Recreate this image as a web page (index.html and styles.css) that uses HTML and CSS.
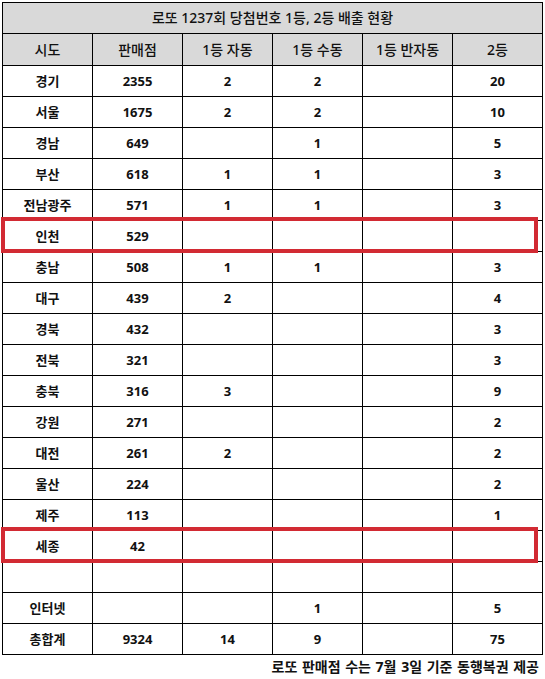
FILE: index.html
```html
<!DOCTYPE html>
<html lang="ko">
<head>
<meta charset="utf-8">
<title>로또 1237회 당첨번호 1등, 2등 배출 현황</title>
<link rel="stylesheet" href="styles.css">
</head>
<body>
<div class="wrap">
  <table class="lotto">
    <colgroup>
      <col class="c"><col class="c"><col class="c"><col class="c"><col class="c"><col class="c">
    </colgroup>
    <thead>
      <tr class="title"><th colspan="6">로또 1237회 당첨번호 1등, 2등 배출 현황</th></tr>
      <tr class="head"><th>시도</th><th>판매점</th><th>1등 자동</th><th>1등 수동</th><th>1등 반자동</th><th>2등</th></tr>
    </thead>
    <tbody>
      <tr><td>경기</td><td>2355</td><td>2</td><td>2</td><td></td><td>20</td></tr>
      <tr><td>서울</td><td>1675</td><td>2</td><td>2</td><td></td><td>10</td></tr>
      <tr><td>경남</td><td>649</td><td></td><td>1</td><td></td><td>5</td></tr>
      <tr><td>부산</td><td>618</td><td>1</td><td>1</td><td></td><td>3</td></tr>
      <tr><td>전남광주</td><td>571</td><td>1</td><td>1</td><td></td><td>3</td></tr>
      <tr><td>인천</td><td>529</td><td></td><td></td><td></td><td></td></tr>
      <tr><td>충남</td><td>508</td><td>1</td><td>1</td><td></td><td>3</td></tr>
      <tr><td>대구</td><td>439</td><td>2</td><td></td><td></td><td>4</td></tr>
      <tr><td>경북</td><td>432</td><td></td><td></td><td></td><td>3</td></tr>
      <tr><td>전북</td><td>321</td><td></td><td></td><td></td><td>3</td></tr>
      <tr><td>충북</td><td>316</td><td>3</td><td></td><td></td><td>9</td></tr>
      <tr><td>강원</td><td>271</td><td></td><td></td><td></td><td>2</td></tr>
      <tr><td>대전</td><td>261</td><td>2</td><td></td><td></td><td>2</td></tr>
      <tr><td>울산</td><td>224</td><td></td><td></td><td></td><td>2</td></tr>
      <tr><td>제주</td><td>113</td><td></td><td></td><td></td><td>1</td></tr>
      <tr><td>세종</td><td>42</td><td></td><td></td><td></td><td></td></tr>
      <tr><td></td><td></td><td></td><td></td><td></td><td></td></tr>
      <tr><td>인터넷</td><td></td><td></td><td>1</td><td></td><td>5</td></tr>
      <tr><td>총합계</td><td>9324</td><td>14</td><td>9</td><td></td><td>75</td></tr>
    </tbody>
  </table>
  <div class="mark mark-incheon"></div>
  <div class="mark mark-sejong"></div>
  <p class="note">로또 판매점 수는 7월 3일 기준 동행복권 제공</p>
</div>
</body>
</html>
```
FILE: styles.css
```css
html, body {
  margin: 0;
  padding: 0;
  background: #fff;
}
body {
  font-family: "Noto Sans", "Noto Sans CJK KR", sans-serif;
  color: #111;
}
.wrap {
  position: relative;
  width: 545px;
  padding-top: 2px;
}
.lotto {
  border-collapse: collapse;
  table-layout: fixed;
  width: 541px;
  margin-left: 2px;
}
.lotto .c {
  width: 90px;
}
.lotto th,
.lotto td {
  border: 1px solid #000;
  padding: 0;
  text-align: center;
  vertical-align: middle;
  font-size: 13px;
  line-height: 16px;
}
.lotto td {
  height: 30px;
  font-weight: 700;
}
.title th {
  height: 30px;
  background: #d9d9d9;
  font-size: 14px;
  font-weight: 500;
}
.head th {
  height: 31px;
  background: #d9d9d9;
  font-size: 14px;
  font-weight: 500;
}
.mark {
  position: absolute;
  left: 1px;
  width: 537px;
  height: 36px;
  box-sizing: border-box;
  border: 4px solid #d22a33;
}
.mark-incheon {
  top: 217px;
}
.mark-sejong {
  top: 527px;
}
.note {
  margin: 2px 0 0;
  padding-right: 6px;
  text-align: right;
  font-size: 14px;
  font-weight: 700;
  line-height: 20px;
  word-spacing: 1px;
}
```
